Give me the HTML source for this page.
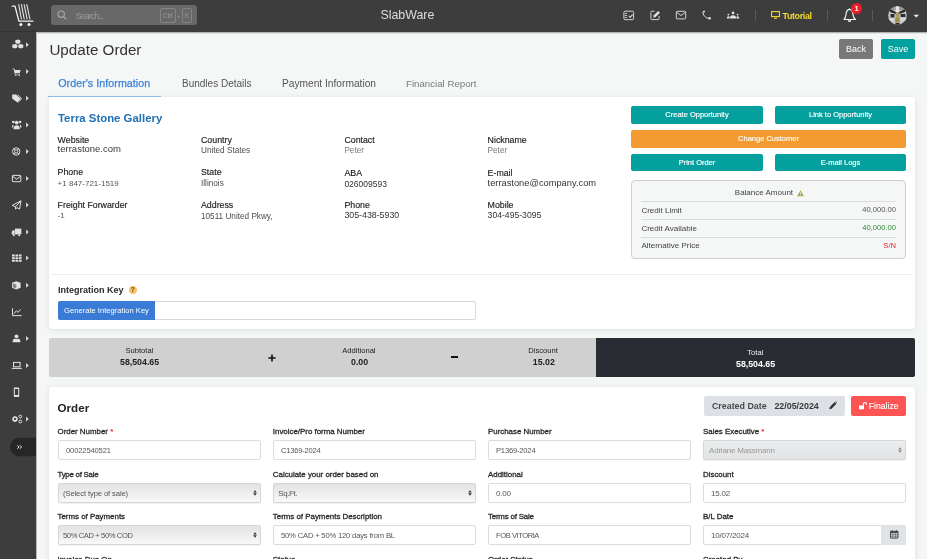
<!DOCTYPE html>
<html><head><meta charset="utf-8">
<style>
*{box-sizing:border-box;margin:0;padding:0}
html,body{width:927px;height:559px;overflow:hidden}
body{position:relative;background:#f5f7f7;font-family:"Liberation Sans",sans-serif;color:#333}
.a{position:absolute}
.t{position:absolute;white-space:nowrap;line-height:1}
#hdr{left:0;top:0;width:927px;height:32px;background:#3d3d3d;box-shadow:0 0.8px 1.2px rgba(0,0,0,.35)}
#side{left:0;top:32px;width:36px;height:527px;background:#3d3d3d}
.card{position:absolute;background:#fff;border-radius:4px;box-shadow:0 1px 6px rgba(0,0,0,.10)}
.btn{position:absolute;color:#fff;text-align:center;border-radius:2px;white-space:nowrap}
.lbl{position:absolute;white-space:nowrap;line-height:1;font-size:7.9px;font-weight:normal;color:#2a2a2a;-webkit-text-stroke:0.3px #2a2a2a}
.inp{position:absolute;height:20px;width:203px;border:1px solid #dcdcdc;border-radius:2px;background:#fff}
.inp span{position:absolute;left:7px;top:6px;font-size:8px;line-height:1;color:#555;white-space:nowrap;letter-spacing:-0.2px}
.sel{background:linear-gradient(#e3e3e3,#ececec 45%,#f9f9f9);border-color:#d6d6d6;box-shadow:0 0.5px 1px rgba(0,0,0,.06)}
.sel span{left:4.5px}
.arr{position:absolute;right:3px;top:6px;width:4px;height:6px}
.il{font-size:8.8px;color:#222;-webkit-text-stroke:0.15px #222}
.iv{font-size:8px;color:#555}
.iv2{font-size:8.2px;color:#4d4d4d}
.b7{font-size:7.5px;line-height:18.6px;-webkit-text-stroke:0.15px #fff}
.bl{font-size:8px;color:#444}
.bv{font-size:7.6px;color:#555}
.sl{font-size:7.6px;color:#222}
.sv{font-size:8.8px;font-weight:bold;color:#222}
</style></head><body><div style="position:absolute;left:0;top:0;width:927px;height:559px;will-change:transform">

<!-- HEADER -->
<div id="hdr" class="a"></div>
<div class="a" style="left:0;top:31px;width:36px;height:1px;background:#333"></div>
<!-- logo -->
<svg class="a" style="left:0;top:0" width="40" height="30" viewBox="0 0 40 30">
 <g stroke="#f4f4f4" stroke-width="1.3" fill="none" stroke-linecap="round" stroke-linejoin="round">
  <path d="M12.3 6.2 H15 L18.9 21.2 H32.8"/>
 </g>
 <g stroke="#e8e8e8" stroke-width="1.1" fill="none" stroke-linecap="round">
  <path d="M18.7 4.5 L21.4 19"/><path d="M21.4 4.5 L24.2 19"/><path d="M24.1 4.5 L27.1 19"/><path d="M26.8 4.5 L29.9 19"/>
 </g>
 <circle cx="20.9" cy="24.5" r="1.5" fill="#fff"/><circle cx="29" cy="24.5" r="1.5" fill="#fff"/>
</svg>
<!-- search -->
<div class="a" style="left:51px;top:5px;width:146px;height:20px;background:#686868;border-radius:3px"></div>
<svg class="a" style="left:57px;top:10px" width="10" height="10" viewBox="0 0 10 10"><circle cx="4.2" cy="4.2" r="3.2" stroke="#a8a8a8" stroke-width="1.2" fill="none"/><path d="M6.6 6.6 L9 9" stroke="#a8a8a8" stroke-width="1.3"/></svg>
<div class="t" style="left:75.7px;top:11.5px;font-size:8.6px;color:#9c9c9c;letter-spacing:-0.75px">Search...</div>
<div class="a" style="left:159.5px;top:8px;width:16px;height:15px;border:1px solid #858585;border-radius:2px"></div>
<div class="t" style="left:162.8px;top:12.5px;font-size:6.4px;color:#9a9a9a">Ctrl</div>
<div class="t" style="left:177px;top:12.5px;font-size:6px;color:#9a9a9a">+</div>
<div class="a" style="left:182px;top:8px;width:10px;height:15px;border:1px solid #858585;border-radius:2px"></div>
<div class="t" style="left:185px;top:12.5px;font-size:6.4px;color:#9a9a9a">K</div>
<div class="t" style="left:380.4px;top:8.5px;font-size:12.4px;color:#dedede">SlabWare</div>

<!-- header icons -->
<svg class="a" style="left:600px;top:0" width="150" height="32" viewBox="600 0 150 32">
 <g fill="none" stroke="#e4e4e4" stroke-width="0.9">
  <rect x="623.9" y="11.2" width="9.7" height="8.5" rx="1.2"/>
  <path d="M650.9 12.4 V18.8 Q650.9 19.6 651.7 19.6 H658.3 Q659.1 19.6 659.1 18.8 V16" />
  <path d="M654.5 11.2 H651.7 Q650.9 11.2 650.9 12"/>
  <rect x="676.3" y="11.3" width="9.4" height="7.6" rx="0.9"/><path d="M676.6 12.2 L681 15.6 L685.4 12.2"/>
  <path d="M703.4 11.3 Q702.2 12.8 703.8 15.2 Q706.2 18.6 709.2 18.6" stroke-width="1"/>
 </g>
 <g fill="#e4e4e4">
  <path d="M624.8 13.3 H627.2 V14 H624.8Z M624.8 15.2 H627.2 V15.9 H624.8Z M624.8 17.1 H627.2 V17.8 H624.8Z"/>
  <path d="M628.6 16.4 L629.4 15.6 L630.2 16.4 L632.2 14.2 L633 15 L630.2 17.9Z"/>
  <path d="M653.2 17.6 L653.6 15.6 L658.2 11 L659.9 12.7 L655.3 17.3Z"/>
  <path d="M702.6 11.2 L704.4 10.6 L705.2 11.6 L704 12.8Z"/>
  <circle cx="709.6" cy="18.2" r="1.2"/>
  <circle cx="733" cy="12.9" r="1.3"/><path d="M729.8 18.4 Q730 15.3 733 15.3 Q736 15.3 736.2 18.4Z"/>
  <circle cx="728.4" cy="14.6" r="0.9"/><path d="M726.7 18.4 Q726.8 16.2 728.4 16.2 Q729.3 16.2 729.7 16.9 L729.3 18.4Z"/>
  <circle cx="737.6" cy="14.6" r="0.9"/><path d="M739.3 18.4 Q739.2 16.2 737.6 16.2 Q736.7 16.2 736.3 16.9 L736.7 18.4Z"/>
 </g>
</svg>
<div class="a" style="left:755px;top:10px;width:1px;height:11px;background:#5a5a5a"></div>
<svg class="a" style="left:770.5px;top:11px" width="9" height="8" viewBox="0 0 9 8" fill="none" stroke="#f2db2c" stroke-width="1.1">
 <rect x="0.6" y="0.6" width="7.8" height="5"/><path d="M3 7.2 H6"/>
</svg>
<div class="t" style="left:782.5px;top:11.6px;font-size:8.9px;font-weight:bold;color:#f2db2c;letter-spacing:-0.35px">Tutorial</div>
<div class="a" style="left:827px;top:10px;width:1px;height:11px;background:#5a5a5a"></div>
<svg class="a" style="left:840px;top:5px" width="20" height="20" viewBox="0 0 20 20" fill="none" stroke="#f2f2f2" stroke-width="1.2" stroke-linejoin="round">
 <path d="M4 14.5 Q5.6 13 6 9.5 Q6.4 4.5 9.5 4.3 Q12.6 4.5 13 9.5 Q13.4 13 15.5 14.5 Z"/><path d="M8.2 15.4 Q9.5 17.2 10.8 15.4" stroke-width="1.4"/><path d="M9.5 3.5 V4.3"/>
</svg>
<div class="a" style="left:851px;top:3.4px;width:11px;height:10.8px;border-radius:50%;background:#ee1c24"></div>
<div class="t" style="left:854.5px;top:5.2px;font-size:7.4px;font-weight:bold;color:#fff">1</div>
<div class="a" style="left:872px;top:10px;width:1px;height:11px;background:#5a5a5a"></div>
<svg class="a" style="left:887.8px;top:5.8px" width="19" height="19" viewBox="0 0 19 19">
 <defs><clipPath id="av"><circle cx="9.5" cy="9.5" r="9.3"/></clipPath></defs>
 <g clip-path="url(#av)">
  <rect width="19" height="19" fill="#c6c6c6"/>
  <rect x="0" y="0" width="19" height="4" fill="#9a9a9a"/>
  <path d="M2 3 L8 6 L8 8 L2 6Z M17 3 L11 6 L11 8 L17 6Z" fill="#2a2a22"/>
  <rect x="7.8" y="0" width="3.2" height="6" fill="#e8e8e8"/>
  <rect x="2.5" y="8" width="4" height="3.5" fill="#2c2f33"/><rect x="12.5" y="8" width="5" height="3" fill="#2c2f33"/>
  <rect x="0" y="12" width="6" height="3" fill="#d9d9d9"/><rect x="12" y="12" width="7" height="3" fill="#d5d5d5"/>
  <rect x="7.8" y="6" width="3.4" height="6" fill="#a89d6a"/><rect x="7.2" y="12" width="4.6" height="4.5" fill="#9c9048"/>
  <rect x="7.5" y="17" width="4" height="2" fill="#222"/>
 </g>
</svg>
<svg class="a" style="left:912.5px;top:14px" width="7" height="5" viewBox="0 0 7 5"><path d="M0.5 0.7 L6 0.7 L3.25 3.5 Z" fill="#f2f2f2"/></svg>

<!-- SIDEBAR -->
<div id="side" class="a"></div>
<div class="a" style="left:36px;top:32px;width:1px;height:527px;background:#b8b8b8"></div>
<svg class="a" style="left:0;top:0" width="36" height="559" viewBox="0 0 36 559">
 <g fill="#e2e2e2">
  <!-- arrows -->
  <path d="M26.1 42.2 L28.7 44.7 L26.1 47.2Z"/><path d="M26.1 69.1 L28.7 71.6 L26.1 74.1Z"/><path d="M26.1 95.7 L28.7 98.2 L26.1 100.7Z"/>
  <path d="M26.1 122.4 L28.7 124.9 L26.1 127.4Z"/><path d="M26.1 149 L28.7 151.5 L26.1 154Z"/><path d="M26.1 176 L28.7 178.5 L26.1 181Z"/>
  <path d="M26.1 202.4 L28.7 204.9 L26.1 207.4Z"/><path d="M26.1 229.5 L28.7 232 L26.1 234.5Z"/><path d="M26.1 255.5 L28.7 258 L26.1 260.5Z"/>
  <path d="M26.1 282.8 L28.7 285.3 L26.1 287.8Z"/><path d="M26.1 336.1 L28.7 338.6 L26.1 341.1Z"/><path d="M26.1 363 L28.7 365.5 L26.1 368Z"/>
  <path d="M26.1 416.5 L28.7 419 L26.1 421.5Z"/>
  <!-- 1 cubes -->
  <path d="M15.3 40.3 L17.8 39.4 L20.3 40.3 L20.3 43 L17.8 43.9 L15.3 43 Z"/>
  <path d="M12.3 44.8 L14.8 43.9 L17.3 44.8 L17.3 47.6 L14.8 48.6 L12.3 47.6 Z"/>
  <path d="M18.3 44.8 L20.8 43.9 L23.3 44.8 L23.3 47.6 L20.8 48.6 L18.3 47.6 Z"/>
  <!-- 2 cart -->
  <path d="M12.4 68.4 H14.2 L14.8 70 H20.6 L19.8 73.2 H15.3 L15.5 73.9 H20 V74.6 H14.8 L13.7 69.2 H12.4 Z"/>
  <circle cx="15.8" cy="75.4" r="0.7"/><circle cx="19.2" cy="75.4" r="0.7"/>
  <!-- 3 tags -->
  <path d="M12.2 94.6 H16.2 L20.8 99.2 L17.4 102.6 L12.2 98.6 Z"/>
  <path d="M17.2 94.6 H18 L22 98.8 L18.2 102.6 L17.8 102.2 L21 99 Z"/>
  <!-- 4 users -->
  <circle cx="16.7" cy="122.6" r="1.9"/><path d="M13.5 129.2 Q13.5 125.2 16.7 125.2 Q19.9 125.2 19.9 129.2 Z"/>
  <circle cx="13.3" cy="122" r="1.3"/><path d="M11.8 127.6 Q11.8 124.6 13.6 124.4 L13.2 127.6Z"/>
  <circle cx="20.1" cy="122" r="1.3"/><path d="M21.6 127.6 Q21.6 124.6 19.8 124.4 L20.2 127.6Z"/>
  <!-- 14 mobile -->
  <path d="M14.3 387.6 H18.7 Q19.2 387.6 19.2 388.2 V396.3 Q19.2 396.9 18.7 396.9 H14.3 Q13.8 396.9 13.8 396.3 V388.2 Q13.8 387.6 14.3 387.6 Z M14.8 389 V395 H18.2 V389 Z"/>
  <!-- 8 truck -->
  <path d="M15 228.6 H21.3 V234.4 H15 Z"/><path d="M14.6 230.2 H12.8 L11.7 232 V234.4 H14.6 Z"/>
  <circle cx="13.8" cy="235.2" r="1"/><circle cx="19.2" cy="235.2" r="1"/>
  <!-- 9 grid -->
  <path d="M12 254.6 H14.8 V256.6 H12Z M15.5 254.6 H18.2 V256.6 H15.5Z M18.9 254.6 H21.6 V256.6 H18.9Z M12 257.3 H14.8 V259.1 H12Z M15.5 257.3 H18.2 V259.1 H15.5Z M18.9 257.3 H21.6 V259.1 H18.9Z M12 259.8 H14.8 V261.7 H12Z M15.5 259.8 H18.2 V261.7 H15.5Z M18.9 259.8 H21.6 V261.7 H18.9Z"/>
  <!-- 10 cube -->
  <path d="M16.3 281.2 L20.6 282.8 V287.8 L16.3 289.5 L12 287.8 V282.8 Z" fill="#e2e2e2"/>
  <path d="M16.3 284.4 V288.6 L12.8 287.3 V283.3Z" fill="#3d3d3d" opacity="0.55"/>
  <!-- 12 user -->
  <circle cx="16.5" cy="336.3" r="1.9"/><path d="M12.6 342.2 Q12.6 338.8 14.6 338.4 Q16.5 339.6 18.4 338.4 Q20.4 338.8 20.4 342.2 Z"/>
  <!-- 15 cogs -->
  <path d="M15 416.3 a2.8 2.8 0 1 0 0.01 0Z M15 417.8 a1.1 1.1 0 1 1 -0.01 0Z" fill-rule="evenodd"/>
 </g>
 <g fill="none" stroke="#e2e2e2" stroke-width="1">
  <!-- 5 life ring -->
  <circle cx="16.2" cy="151.5" r="3.7"/><circle cx="16.2" cy="151.5" r="1.6"/>
  <path d="M13.6 148.9 L14.9 150.2 M18.8 148.9 L17.5 150.2 M13.6 154.1 L14.9 152.8 M18.8 154.1 L17.5 152.8"/>
  <!-- 6 envelope -->
  <rect x="12.4" y="175.4" width="8.4" height="6.3" rx="0.6"/><path d="M12.6 176.2 L16.6 179.2 L20.6 176.2"/>
  <!-- 7 plane -->
  <path d="M12.2 205.4 L21 200.8 L19.6 209 L16.8 207.6 L15.6 209.2 L15.5 206.8 Z M15.5 206.8 L21 200.8" stroke-linejoin="round"/>
  <!-- 11 chart -->
  <path d="M12.5 308.3 V315.6 H21.5"/><path d="M14 313.6 L16.4 310.8 L18 312.4 L20.6 309.4" />
  <!-- 13 laptop -->
  <rect x="13.5" y="362.4" width="6.6" height="4.4"/><path d="M11.8 368.4 H21.8"/>
  <!-- cogs small -->
  <circle cx="20.3" cy="416.6" r="1.4"/><circle cx="20.3" cy="421.5" r="1.4"/>
 </g>
 <path d="M10 447 A9.2 9.2 0 0 1 19.2 437.8 H36 V456.2 H19.2 A9.2 9.2 0 0 1 10 447Z" fill="#262626"/>
 <path d="M17.4 445.3 L19 447 L17.4 448.7 M19.9 445.3 L21.5 447 L19.9 448.7" stroke="#e8e8e8" stroke-width="1" fill="none"/>
</svg>

<!-- PAGE TITLE & TABS -->
<div class="t" style="left:49.4px;top:42px;font-size:15.2px;color:#333">Update Order</div>
<div class="btn" style="left:839px;top:39px;width:34px;height:20px;background:#787878;font-size:9px;line-height:20.5px">Back</div>
<div class="btn" style="left:881px;top:39px;width:34px;height:20px;background:#00a19e;font-size:9px;line-height:20.5px">Save</div>


<div class="t" style="left:58.2px;top:77.7px;font-size:10.7px;color:#3b82d8;-webkit-text-stroke:0.25px #3b82d8;letter-spacing:0.05px">Order's Information</div>
<div class="t" style="left:182px;top:79px;font-size:10px;color:#555">Bundles Details</div>
<div class="t" style="left:282px;top:79px;font-size:10.2px;color:#555">Payment Information</div>
<div class="t" style="left:406px;top:79px;font-size:9.7px;color:#7a7a7a">Financial Report</div>

<!-- CARD 1 -->
<div class="card" style="left:48.5px;top:96.5px;width:866.5px;height:232.5px"></div>
<div class="a" style="left:48px;top:95.8px;width:113px;height:1.2px;background:#90b9ec"></div>

<div class="t" style="left:58px;top:112.5px;font-size:11.4px;font-weight:bold;color:#1f70b4">Terra Stone Gallery</div>

<!-- info grid -->
<div class="t il" style="left:57.6px;top:135.5px">Website</div>
<div class="t iv" style="left:57.6px;top:143.5px;font-size:9.5px;color:#3a3a3a">terrastone.com</div>
<div class="t il" style="left:57.6px;top:168.3px">Phone</div>
<div class="t iv" style="left:57.6px;top:180px">+1 847-721-1519</div>
<div class="t il" style="left:57.6px;top:200.8px">Freight Forwarder</div>
<div class="t iv" style="left:57.6px;top:211.7px">-1</div>

<div class="t il" style="left:201px;top:135.5px">Country</div>
<div class="t iv2" style="left:201px;top:147.3px">United States</div>
<div class="t il" style="left:201px;top:168.3px">State</div>
<div class="t iv2" style="left:201px;top:180px">Illinois</div>
<div class="t il" style="left:201px;top:200.8px">Address</div>
<div class="t iv2" style="left:201px;top:212.6px">10511 United Pkwy,</div>

<div class="t il" style="left:344.4px;top:135.5px">Contact</div>
<div class="t iv2" style="left:344.4px;top:147px;color:#777">Peter</div>
<div class="t il" style="left:344.4px;top:169px;color:#111">ABA</div>
<div class="t iv" style="left:344.4px;top:179.8px;color:#333;font-size:8.5px">026009593</div>
<div class="t il" style="left:344.4px;top:200.8px">Phone</div>
<div class="t iv" style="left:344.4px;top:211px;color:#333;font-size:8.8px">305-438-5930</div>

<div class="t il" style="left:487.6px;top:135.5px">Nickname</div>
<div class="t iv2" style="left:487.6px;top:147px;color:#777">Peter</div>
<div class="t il" style="left:487.6px;top:168.5px">E-mail</div>
<div class="t iv" style="left:487.6px;top:179.2px;color:#333;font-size:9.3px">terrastone@company.com</div>
<div class="t il" style="left:487.6px;top:200.8px">Mobile</div>
<div class="t iv" style="left:487.6px;top:211px;color:#333;font-size:8.65px">304-495-3095</div>

<!-- right buttons -->
<div class="btn b7" style="left:631px;top:106px;width:132px;height:18px;background:#03a09e">Create Opportunity</div>
<div class="btn b7" style="left:775px;top:106px;width:131px;height:18px;background:#03a09e">Link to Opportunity</div>
<div class="btn b7" style="left:631px;top:130px;width:275px;height:17.5px;background:#f39a30;line-height:17.5px">Change Customer</div>
<div class="btn b7" style="left:631px;top:153.5px;width:132px;height:17.5px;background:#03a09e;line-height:17.5px">Print Order</div>
<div class="btn b7" style="left:775px;top:153.5px;width:131px;height:17.5px;background:#03a09e;line-height:17.5px">E-mail Logs</div>

<!-- balance box -->
<div class="a" style="left:631px;top:180px;width:275px;height:78.5px;border:1px solid #cfcfcf;border-radius:4px;background:#f5f6f6"></div>
<div class="t bl" style="left:734.8px;top:189px">Balance Amount</div>
<svg class="a" style="left:796.5px;top:189.5px" width="7" height="7" viewBox="0 0 7 7"><path d="M3.5 0.3 L6.8 6.3 H0.2Z" fill="#a9a64a"/><path d="M3.5 2.3 V4.3 M3.5 5 V5.6" stroke="#f5f6f6" stroke-width="0.8"/></svg>
<div class="a" style="left:641px;top:201.2px;width:255px;height:1px;background:#dcdcdc"></div>
<div class="a" style="left:641px;top:219.2px;width:255px;height:1px;background:#dcdcdc"></div>
<div class="a" style="left:641px;top:237px;width:255px;height:1px;background:#dcdcdc"></div>
<div class="t bl" style="left:641.4px;top:206.8px">Credit Limit</div>
<div class="t bl" style="left:641.4px;top:225.2px">Credit Available</div>
<div class="t bl" style="left:641.4px;top:241.7px">Alternative Price</div>
<div class="t bv" style="right:31px;top:206.3px">40,000.00</div>
<div class="t bv" style="right:31px;top:224.4px;color:#2c8a36">40,000.00</div>
<div class="t bv" style="right:31px;top:241.7px;color:#e8262a">S/N</div>

<!-- separator + integration key -->
<div class="a" style="left:51px;top:274px;width:861px;height:1px;background:#ececec"></div>
<div class="t" style="left:57.9px;top:286.3px;font-size:9px;font-weight:bold;color:#2a2a2a">Integration Key</div>
<div class="a" style="left:128.6px;top:285.5px;width:8.2px;height:8.2px;border-radius:50%;background:#f6c16a"></div>
<div class="t" style="left:130.7px;top:286.6px;font-size:6.5px;font-weight:bold;color:#6b4a10">?</div>
<div class="a" style="left:58px;top:301px;width:418px;height:19px;border:1px solid #d8d8d8;border-radius:2px;background:#fff"></div>
<div class="btn" style="left:58px;top:301px;width:97px;height:19px;background:#3a7bd5;font-size:7.6px;line-height:19px;border-radius:2px 0 0 2px">Generate Integration Key</div>

<!-- SUMMARY BAR -->
<div class="a" style="left:49px;top:338px;width:866px;height:39px;background:#d0d0d0;border-radius:2px"></div>
<div class="a" style="left:596px;top:338px;width:319px;height:39px;background:#292d33;border-radius:0 2px 2px 0"></div>
<div class="t sl" style="left:125.5px;top:347px">Subtotal</div>
<div class="t sv" style="left:120px;top:358px">58,504.65</div>
<svg class="a" style="left:267.5px;top:353.6px" width="8" height="8" viewBox="0 0 8 8"><path d="M0.4 4 H7.6 M4 0.4 V7.6" stroke="#111" stroke-width="1.6"/></svg>
<div class="t sl" style="left:342.2px;top:347px">Additional</div>
<div class="t sv" style="left:351px;top:358px">0.00</div>
<div class="a" style="left:451.3px;top:356.4px;width:7px;height:1.8px;background:#111"></div>
<div class="t sl" style="left:528.3px;top:347px">Discount</div>
<div class="t sv" style="left:532.8px;top:358px">15.02</div>
<div class="t sl" style="left:747.3px;top:348.5px;color:#eee">Total</div>
<div class="t sv" style="left:736px;top:359.5px;color:#fff">58,504.65</div>

<!-- CARD 2 -->
<div class="card" style="left:48.5px;top:386.5px;width:866.5px;height:190px"></div>
<div class="t" style="left:57.6px;top:401.8px;font-size:11.6px;font-weight:bold;color:#222">Order</div>
<div class="a" style="left:704px;top:395.7px;width:140.6px;height:20.8px;background:#dde0e4;border-radius:2px"></div>
<div class="t" style="left:711.9px;top:401.6px;font-size:8.9px;font-weight:bold;color:#4a4a4a">Created Date</div>
<div class="t" style="left:774.4px;top:401.6px;font-size:8.9px;font-weight:bold;color:#3a3a3a">22/05/2024</div>
<svg class="a" style="left:828.5px;top:401px" width="8.5" height="8.5" viewBox="0 0 8 8"><path d="M0.3 7.7 L0.8 5.6 L5.4 1 L7 2.6 L2.4 7.2 Z M6 0.4 L6.4 0 L8 1.6 L7.6 2" fill="#333"/></svg>
<div class="a" style="left:851.3px;top:395.7px;width:54.7px;height:20.3px;background:#fc5353;border-radius:2px"></div>
<svg class="a" style="left:855px;top:399px" width="14" height="12" viewBox="0 0 14 12"><path d="M4 6.4 H9 V10.3 H4Z" fill="#fff"/><path d="M8.3 6.6 V5.2 A1.6 1.6 0 0 1 11.5 5.2 V5.8" stroke="#fff" stroke-width="1.1" fill="none"/></svg>
<div class="t" style="left:868.7px;top:401.8px;font-size:8.7px;color:#fff;-webkit-text-stroke:0.1px #fff">Finalize</div>


<!-- FORM -->
<div class="lbl" style="left:57.5px;top:427.87px">Order Number <b style="color:#e82c2c;-webkit-text-stroke:0">*</b></div>
<div class="inp" style="left:57.5px;top:439.5px"><span style="letter-spacing:-0.14px;transform:scaleX(0.946);transform-origin:0 50%">00022540521</span></div>
<div class="lbl" style="left:272.8px;top:427.87px">Invoice/Pro forma Number</div>
<div class="inp" style="left:272.8px;top:439.5px"><span style="letter-spacing:-0.23px;transform:scaleX(0.945);transform-origin:0 50%">C1369-2024</span></div>
<div class="lbl" style="left:488px;top:427.87px">Purchase Number</div>
<div class="inp" style="left:488px;top:439.5px"><span style="letter-spacing:-0.21px;transform:scaleX(0.95);transform-origin:0 50%">P1369-2024</span></div>
<div class="lbl" style="left:703px;top:427.87px">Sales Executive <b style="color:#e82c2c;-webkit-text-stroke:0">*</b></div>
<div class="inp sel" style="left:703px;top:439.5px;background:linear-gradient(#ebeced,#e2e3e5)"><span style="color:#999;left:5px">Adriane Massmann</span><svg class="arr" viewBox="0 0 4 6"><path d="M2 0.2 L3.8 2.6 H0.2Z M2 5.8 L3.8 3.3 H0.2Z" fill="#888"/></svg></div>
<div class="lbl" style="left:57.5px;top:470.57px;letter-spacing:-0.25px">Type of Sale</div>
<div class="inp sel" style="left:57.5px;top:482.5px"><span style="letter-spacing:-0.09px;transform:scaleX(0.945);transform-origin:0 50%">(Select type of sale)</span><svg class="arr" viewBox="0 0 4 6"><path d="M2 0.2 L3.8 2.6 H0.2Z M2 5.8 L3.8 3.3 H0.2Z" fill="#333"/></svg></div>
<div class="lbl" style="left:272.8px;top:470.57px">Calculate your order based on</div>
<div class="inp sel" style="left:272.8px;top:482.5px"><span style="letter-spacing:-0.4px">Sq.Ft.</span><svg class="arr" viewBox="0 0 4 6"><path d="M2 0.2 L3.8 2.6 H0.2Z M2 5.8 L3.8 3.3 H0.2Z" fill="#333"/></svg></div>
<div class="lbl" style="left:488px;top:470.57px">Additional</div>
<div class="inp" style="left:488px;top:482.5px"><span>0.00</span></div>
<div class="lbl" style="left:703px;top:470.57px">Discount</div>
<div class="inp" style="left:703px;top:482.5px"><span>15.02</span></div>
<div class="lbl" style="left:57.5px;top:513.17px">Terms of Payments</div>
<div class="inp sel" style="left:57.5px;top:525.2px"><span style="letter-spacing:-0.4px;transform:scaleX(0.947);transform-origin:0 50%">50% CAD + 50% COD</span><svg class="arr" viewBox="0 0 4 6"><path d="M2 0.2 L3.8 2.6 H0.2Z M2 5.8 L3.8 3.3 H0.2Z" fill="#333"/></svg></div>
<div class="lbl" style="left:272.8px;top:513.17px">Terms of Payments Description</div>
<div class="inp" style="left:272.8px;top:525.2px"><span style="letter-spacing:-0.19px;transform:scaleX(0.953);transform-origin:0 50%">50% CAD + 50% 120 days from BL</span></div>
<div class="lbl" style="left:488px;top:513.17px;letter-spacing:-0.2px">Terms of Sale</div>
<div class="inp" style="left:488px;top:525.2px"><span style="letter-spacing:-0.48px;transform:scaleX(0.95);transform-origin:0 50%">FOB VITORIA</span></div>
<div class="lbl" style="left:703px;top:513.17px">B/L Date</div>
<div class="inp" style="left:703px;top:525.2px"><span>10/07/2024</span></div>
<div class="a" style="left:881px;top:525.2px;width:25px;height:20px;background:#dfe3e6;border-radius:0 2px 2px 0"></div>
<svg class="a" style="left:890px;top:530.4000000000001px" width="8.5" height="8.5" viewBox="0 0 8 8"><path d="M0.5 1.2 H7.5 V7.6 H0.5Z" fill="none" stroke="#444" stroke-width="0.9"/><path d="M0.5 1.2 H7.5 V2.8 H0.5Z" fill="#444"/><path d="M2 0.2 V1.5 M6 0.2 V1.5" stroke="#444" stroke-width="0.9"/><path d="M0.5 4.3 H7.5 M0.5 5.9 H7.5 M2.7 2.8 V7.6 M5.3 2.8 V7.6" stroke="#444" stroke-width="0.5"/></svg>
<div class="lbl" style="left:57.5px;top:555.87px">Invoice Due On</div>
<div class="inp" style="left:57.5px;top:568px"><span></span></div>
<div class="lbl" style="left:272.8px;top:555.87px">Status</div>
<div class="inp" style="left:272.8px;top:568px"><span></span></div>
<div class="lbl" style="left:488px;top:555.87px">Order Status</div>
<div class="inp" style="left:488px;top:568px"><span></span></div>
<div class="lbl" style="left:703px;top:555.87px">Created By</div>
<div class="inp" style="left:703px;top:568px"><span></span></div>
</div></body></html>
